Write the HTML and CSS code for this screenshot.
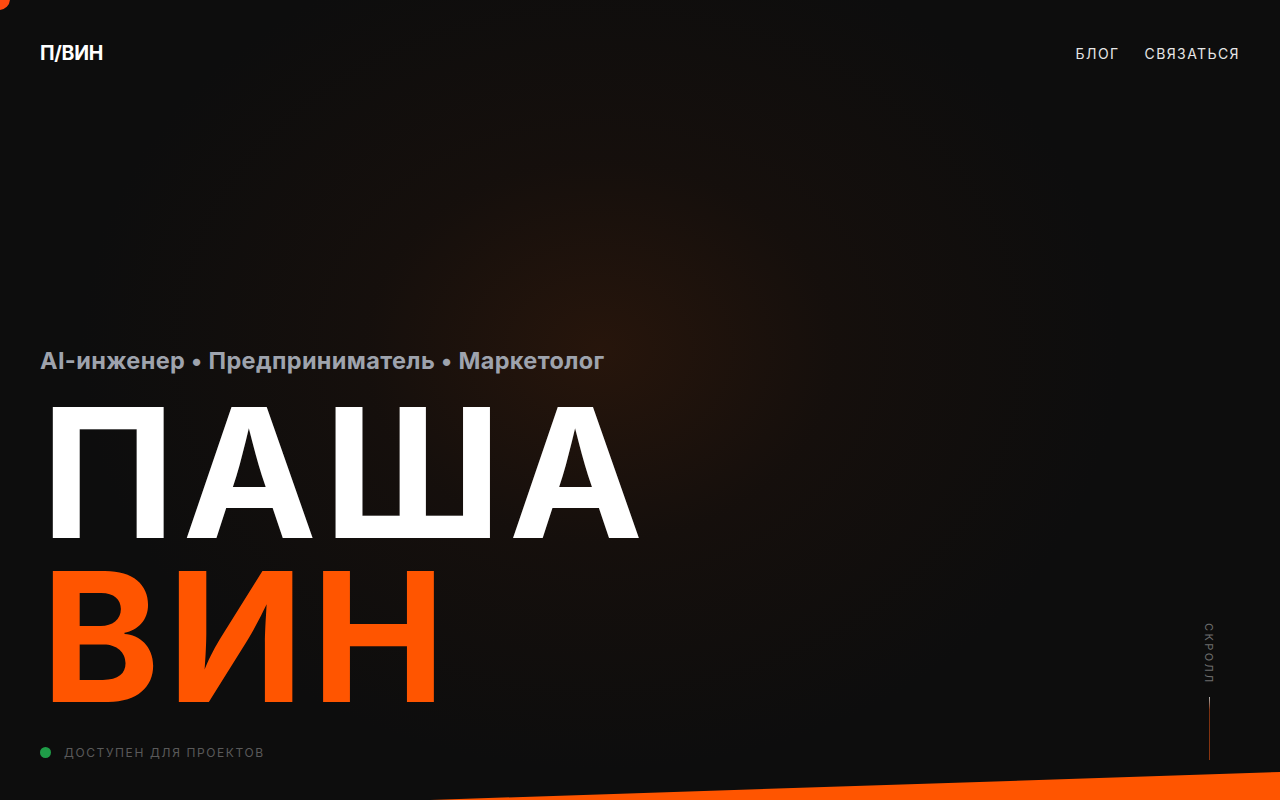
FILE: index.html
```html
<!DOCTYPE html>
<html lang="ru">
<head>
<meta charset="utf-8">
<title>Паша Вин</title>
<link rel="stylesheet" href="styles.css">
</head>
<body>
<section class="hero">
  <div class="glow"></div>
  <header class="header">
    <a class="logo" href="#">П/ВИН</a>
    <nav class="nav">
      <a href="#">БЛОГ</a>
      <a href="#">СВЯЗАТЬСЯ</a>
    </nav>
  </header>
  <div class="content">
    <p class="tagline">AI-инженер • Предприниматель • Маркетолог</p>
    <h1 class="title"><span class="first">ПАША</span><span class="last">ВИН</span></h1>
    <div class="status"><span class="dot"></span><span class="status-text">ДОСТУПЕН ДЛЯ ПРОЕКТОВ</span></div>
  </div>
  <div class="scroll">
    <span class="scroll-text">СКРОЛЛ</span>
    <span class="scroll-line"></span>
  </div>
  <div class="stripe"></div>
  <div class="cursor"></div>
</section>
</body>
</html>
```
FILE: styles.css
```css
* { box-sizing: border-box; }
html, body { margin: 0; padding: 0; }
body {
  background: #0d0d0d;
  font-family: Inter, "Noto Sans", sans-serif;
  color: #fff;
  overflow: hidden;
}
.hero {
  position: relative;
  height: 800px;
  display: flex;
  flex-direction: column;
  overflow: hidden;
  background: #0d0d0d;
}
.glow {
  position: absolute;
  inset: 0;
  background: radial-gradient(ellipse 520px 420px at 600px 350px, rgba(60, 28, 10, 0.55) 0%, rgba(40, 20, 10, 0.3) 45%, rgba(13, 13, 13, 0) 100%);
  pointer-events: none;
}
.header {
  position: relative;
  display: flex;
  justify-content: space-between;
  align-items: center;
  padding: 41px 40px 0 40px;
}
.logo {
  font-size: 19.5px;
  font-weight: 700;
  color: #fff;
  text-decoration: none;
  letter-spacing: -0.3px;
}
.nav { display: flex; gap: 25px; }
.nav a {
  color: #e6e6e6;
  text-decoration: none;
  font-size: 14px;
  letter-spacing: 1.4px;
}
.content {
  position: relative;
  margin-top: auto;
  padding: 0 40px 40px 40px;
}
.tagline {
  margin: 0 0 16px 0;
  font-size: 23.5px;
  font-weight: 700;
  color: #9ea3ad;
  line-height: 1.2;
  letter-spacing: 0.35px;
}
.title {
  margin: 0;
  font-size: 180px;
  font-weight: 700;
  line-height: 164px;
  letter-spacing: 7px;
  display: flex;
  flex-direction: column;
  margin-left: 1px;
}
.first { color: #ffffff; }
.last { color: #ff5500; }
.status {
  margin-top: 26px;
  display: flex;
  align-items: center;
  gap: 13px;
}
.dot {
  width: 11px;
  height: 11px;
  border-radius: 50%;
  background: #1f9d48;
}
.status-text {
  font-size: 12px;
  letter-spacing: 1.6px;
  color: #5a5a5a;
}
.scroll {
  position: absolute;
  right: 64px;
  bottom: 40px;
  display: flex;
  flex-direction: column;
  align-items: center;
  gap: 12px;
}
.scroll-text {
  writing-mode: vertical-rl;
  font-size: 11px;
  letter-spacing: 2.4px;
  color: #6e6e6e;
}
.scroll-line {
  width: 1px;
  height: 63px;
  background: linear-gradient(to bottom, #b0b0b0 0%, #7a3010 20%, #8a3510 100%);
}
.stripe {
  position: absolute;
  left: 0;
  right: 0;
  bottom: 0;
  height: 28px;
  background: #ff5500;
  clip-path: polygon(33.6% 100%, 100% 0, 100% 100%);
}
.cursor {
  position: absolute;
  left: -12px;
  top: -12px;
  width: 22px;
  height: 22px;
  border-radius: 50%;
  background: #ff4a10;
}
```
